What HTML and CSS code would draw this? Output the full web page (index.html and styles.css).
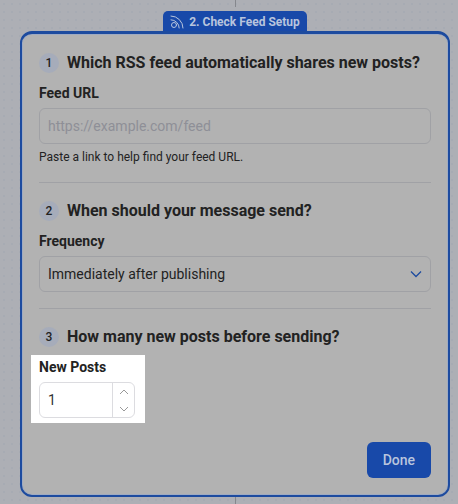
FILE: index.html
```
<!DOCTYPE html>
<html lang="en">
<head>
  <meta charset="UTF-8">
  <meta name="viewport" content="width=device-width, initial-scale=1.0">
  <title>Check Feed Setup</title>
  <link rel="stylesheet" href="styles.css">
</head>
<body>
  <div class="connector connector-top"></div>

  <div class="step-tab">
    <svg class="rss-icon" width="14" height="14" viewBox="0 0 14 14" fill="none" stroke="currentColor" stroke-linecap="round">
      <circle cx="4" cy="10" r="2.5"/>
      <path d="M1 4.800a8.200 8.200 0 0 1 8.200 8.200"/>
      <path d="M1 1a12 12 0 0 1 12 12"/>
    </svg>
    <span>2. Check Feed Setup</span>
  </div>

  <form class="card">
    <section class="question">
      <h2 class="question-title"><span class="number">1</span>Which RSS feed automatically shares new posts?</h2>
      <label class="label" for="feed-url">Feed URL</label>
      <input class="field" id="feed-url" type="url" placeholder="https://example.com/feed">
      <p class="help">Paste a link to help find your feed URL.</p>
    </section>

    <section class="question">
      <h2 class="question-title"><span class="number">2</span>When should your message send?</h2>
      <label class="label" for="frequency">Frequency</label>
      <div class="select-box">
        <select class="field" id="frequency">
          <option>Immediately after publishing</option>
        </select>
        <svg class="chevron" width="12" height="8" viewBox="0 0 12 8" fill="none" stroke="currentColor" stroke-width="1.300">
          <path d="M1 1.500l5 5 5-5"/>
        </svg>
      </div>
    </section>

    <section class="question">
      <h2 class="question-title"><span class="number">3</span>How many new posts before sending?</h2>
      <div class="spotlight">
        <label class="label" for="new-posts">New Posts</label>
        <div class="stepper">
          <input class="stepper-input" id="new-posts" type="number" value="1" min="1">
          <div class="stepper-buttons">
            <button type="button" aria-label="Increase">
              <svg width="10" height="6" viewBox="0 0 10 6" fill="none" stroke="currentColor"><path d="M1 5l4-4 4 4"/></svg>
            </button>
            <button type="button" aria-label="Decrease">
              <svg width="10" height="6" viewBox="0 0 10 6" fill="none" stroke="currentColor"><path d="M1 1l4 4 4-4"/></svg>
            </button>
          </div>
        </div>
      </div>
    </section>

    <div class="actions">
      <button class="done" type="button">Done</button>
    </div>
  </form>

  <div class="connector"></div>
</body>
</html>
```
FILE: styles.css
```
* { box-sizing: border-box; }
body {
  margin: 0;
  min-height: 100vh;
  padding: 0 8px 0 20px;
  display: flex;
  flex-direction: column;
  align-items: center;
  font-family: Roboto, "Liberation Sans", sans-serif;
  font-size: 14px;
  line-height: 20px;
  color: #222;
  background-color: #adafb5;
  background-image: radial-gradient(circle, #a7abb3 1px, transparent 1px);
  background-size: 8px 8px;
}
.connector {
  width: 1px;
  height: 7px;
  background: #85878d;
}
.connector-top { margin-bottom: 4px; }
.step-tab {
  display: flex;
  align-items: center;
  gap: 5px;
  height: 20px;
  padding: 2px 7px 0;
  border-radius: 5px 5px 0 0;
  background: #1849a9;
  color: #b8c5dd;
  font-size: 12px;
  font-weight: 700;
}
.card {
  align-self: stretch;
  padding: 17px;
  border: 2px solid #1d4b9f;
  border-top-width: 3px;
  border-radius: 12px;
  background: #b2b2b2;
  box-shadow: inset 0 0 0 1px #9fabc2;
}
.question + .question {
  margin-top: 16px;
  padding-top: 16px;
  border-top: 1px solid #a0a1a5;
}
.question-title {
  display: flex;
  align-items: center;
  gap: 8px;
  margin: 0 0 9px;
  font-size: 16px;
  line-height: 24px;
  font-weight: 700;
  white-space: nowrap;
}
.number {
  width: 20px;
  border-radius: 50%;
  background: #a6acba;
  font-size: 12px;
  line-height: 20px;
  font-weight: 500;
  text-align: center;
}
.label {
  display: block;
  margin-bottom: 6px;
  line-height: 18px;
  font-weight: 700;
}
.field {
  display: block;
  width: 100%;
  height: 36px;
  margin: 0;
  padding: 0 8px;
  border: 1px solid #a0a1a5;
  border-radius: 6px;
  background: transparent;
  color: #222;
  font: inherit;
  appearance: none;
}
.field::placeholder { color: #8e8f97; }
.help {
  margin: 4px 0 0;
  font-size: 12px;
  line-height: 18px;
}
.select-box {
  display: grid;
  align-items: center;
}
.select-box > * { grid-area: 1 / 1; }
.chevron {
  justify-self: end;
  margin-right: 9px;
  color: #1d4b9f;
  pointer-events: none;
}
.spotlight {
  width: fit-content;
  margin: -3px 0 0 -8px;
  padding: 3px 10px 5px 8px;
  background: #fff;
}
.stepper {
  display: flex;
  width: 96px;
  height: 36px;
  border: 1px solid #dcdce0;
  border-radius: 6px;
}
.stepper-input {
  flex: 1;
  min-width: 0;
  padding: 0 8px;
  border: 0;
  background: none;
  color: #333;
  font: inherit;
  appearance: textfield;
}
.stepper-input::-webkit-inner-spin-button { appearance: none; }
.stepper-buttons {
  display: flex;
  flex-direction: column;
  width: 22px;
  border-left: 1px solid #dcdce0;
}
.stepper-buttons button {
  flex: 1;
  display: flex;
  align-items: center;
  justify-content: center;
  padding: 0;
  border: 0;
  background: none;
  color: #999;
}
.actions {
  display: flex;
  justify-content: flex-end;
  margin-top: 19px;
}
.done {
  height: 36px;
  padding: 0 16px;
  border: 0;
  border-radius: 6px;
  background: #1849a9;
  color: #b8c5dd;
  font: inherit;
  font-weight: 500;
}
```
